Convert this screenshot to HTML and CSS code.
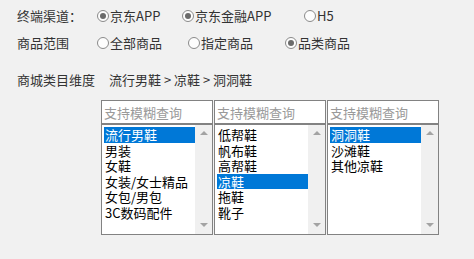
FILE: index.html
```html
<!DOCTYPE html>
<html lang="zh-CN">
<head>
<meta charset="utf-8">
<title>商品范围</title>
<link rel="stylesheet" href="styles.css">
</head>
<body>
<div class="page">
  <div class="row row-channel">
    <span class="label">终端渠道：</span>
    <span class="opt"><span class="radio checked"></span>京东APP</span>
    <span class="opt"><span class="radio checked"></span>京东金融APP</span>
    <span class="opt"><span class="radio"></span>H5</span>
  </div>
  <div class="row row-scope">
    <span class="label">商品范围</span>
    <span class="opt"><span class="radio"></span>全部商品</span>
    <span class="opt"><span class="radio"></span>指定商品</span>
    <span class="opt"><span class="radio checked"></span>品类商品</span>
  </div>
  <div class="row row-path">
    <span class="label">商城类目维度</span>
    <span class="path">流行男鞋 &gt; 凉鞋 &gt; 洞洞鞋</span>
  </div>
  <div class="pickers">
    <div class="picker">
      <input class="search" type="text" placeholder="支持模糊查询">
      <div class="listbox">
        <ul class="items">
          <li class="sel">流行男鞋</li>
          <li>男装</li>
          <li>女鞋</li>
          <li>女装/女士精品</li>
          <li>女包/男包</li>
          <li>3C数码配件</li>
        </ul>
        <div class="scrollbar"><span class="arrow up"></span><span class="arrow down"></span></div>
      </div>
    </div>
    <div class="picker">
      <input class="search" type="text" placeholder="支持模糊查询">
      <div class="listbox">
        <ul class="items">
          <li>低帮鞋</li>
          <li>帆布鞋</li>
          <li>高帮鞋</li>
          <li class="sel">凉鞋</li>
          <li>拖鞋</li>
          <li>靴子</li>
        </ul>
        <div class="scrollbar"><span class="arrow up"></span><span class="arrow down"></span></div>
      </div>
    </div>
    <div class="picker">
      <input class="search" type="text" placeholder="支持模糊查询">
      <div class="listbox">
        <ul class="items">
          <li class="sel">洞洞鞋</li>
          <li>沙滩鞋</li>
          <li>其他凉鞋</li>
        </ul>
        <div class="scrollbar"><span class="arrow up"></span><span class="arrow down"></span></div>
      </div>
    </div>
  </div>
</div>
</body>
</html>
```
FILE: styles.css
```css
html, body {
  margin: 0;
  padding: 0;
  background: #f1f1f1;
}
body {
  font-family: "Noto Sans CJK SC", "Microsoft YaHei", sans-serif;
  font-size: 13px;
  color: #333;
}
.page {
  padding: 6px 0 0 17px;
}
.row {
  display: grid;
  align-items: center;
  height: 20px;
  line-height: 20px;
  white-space: nowrap;
}
.row-channel {
  grid-template-columns: 80px 85px 122px auto;
}
.row-scope {
  margin-top: 7px;
  grid-template-columns: 80px 91px 97px auto;
}
.row-path {
  margin-top: 17px;
  grid-template-columns: 92px auto;
}
.opt {
  display: flex;
  align-items: center;
}
.radio {
  box-sizing: border-box;
  width: 12px;
  height: 12px;
  margin-right: 1px;
  border: 1px solid #8a8a8a;
  border-radius: 50%;
  background: #fdfdfd;
  display: flex;
  align-items: center;
  justify-content: center;
}
.radio.checked::after {
  content: "";
  width: 6px;
  height: 6px;
  border-radius: 50%;
  background: #6b6b6b;
}
.path {
  color: #333;
}
.pickers {
  display: flex;
  gap: 1px;
  margin-top: 10px;
  margin-left: 84px;
}
.picker {
  width: 112px;
  display: flex;
  flex-direction: column;
}
.search {
  box-sizing: border-box;
  width: 112px;
  height: 24px;
  margin: 0;
  padding: 0 2px;
  border: 1px solid #828282;
  border-radius: 0;
  background: #fff;
  font-family: "Noto Sans CJK SC", "Microsoft YaHei", sans-serif;
  font-size: 13px;
  color: #333;
  outline: none;
}
.search::placeholder {
  color: #9a9a9a;
}
.listbox {
  box-sizing: border-box;
  height: 111px;
  border: 1px solid #828282;
  background: #fff;
  display: flex;
}
.items {
  flex: 1;
  list-style: none;
  margin: 0;
  padding: 2px 0 0 2px;
}
.items li {
  height: 15.6px;
  line-height: 15.6px;
  padding-left: 1px;
  color: #000;
  font-size: 13px;
  white-space: nowrap;
}
.items li.sel {
  background: #0078d7;
  color: #fff;
}
.scrollbar {
  width: 17px;
  background: #f0f0f0;
  display: flex;
  flex-direction: column;
  justify-content: space-between;
  align-items: center;
  padding: 6px 0 7px;
}
.arrow {
  width: 0;
  height: 0;
  border-left: 4px solid transparent;
  border-right: 4px solid transparent;
}
.arrow.up {
  border-bottom: 4px solid #a3a3a3;
}
.arrow.down {
  border-top: 4px solid #a3a3a3;
}
```
